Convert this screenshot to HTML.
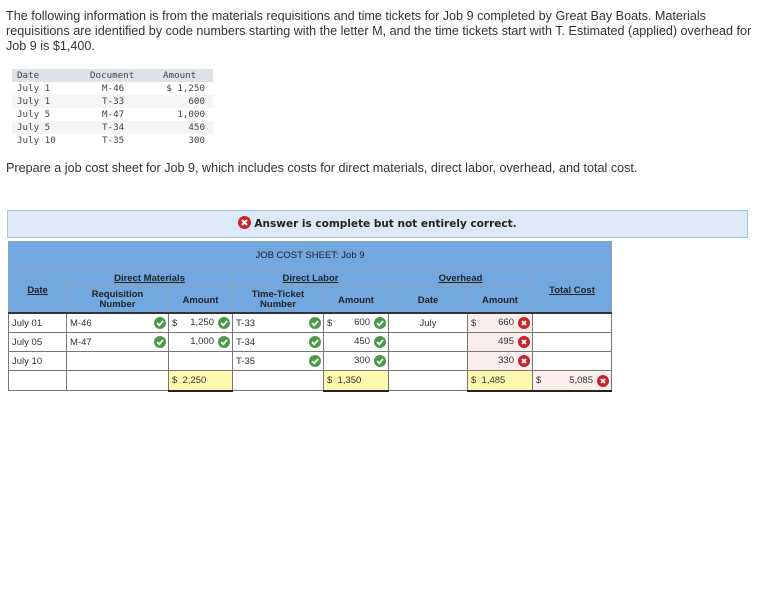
<!DOCTYPE html>
<html><head><meta charset="utf-8"><style>
body{margin:0;background:#fff;font-family:"Liberation Sans",sans-serif;color:#333;width:772px;height:614px;position:relative;overflow:hidden}
.p{position:absolute;left:6px;font-size:12.6px;line-height:15px;color:#333;white-space:nowrap}
.mono{position:absolute;left:12px;top:69px;font-family:"DejaVu Sans Mono","Liberation Mono",monospace;font-size:9.2px;color:#444}
.mono div{height:13px;line-height:13px;position:relative;width:201px}
.mono span{position:absolute}
.banner{position:absolute;left:7px;top:210px;width:741px;height:28px;background:#dde9f6;border:1px solid #a9c3df;box-sizing:border-box;text-align:center;font-family:"DejaVu Sans",sans-serif;font-weight:bold;font-size:10.5px;line-height:27px;color:#222}
table{position:absolute;left:8px;top:241px;border-collapse:collapse;font-size:9.5px;table-layout:fixed}
td{border:1px solid #777;padding:0 3px;height:18px;color:#333;position:relative}
.h{background:#72a7e0;font-weight:bold;color:#222;text-align:center;border-color:#8a9fb8}
.u{text-decoration:underline}
.y{background:#fff9b0}
.pk{background:#fdeeee}
.i{display:inline-block;width:12px;height:12px;border-radius:50%;position:absolute;top:3px;right:2px}
.g{background:#4a9a4a}
.x{background:#c4252c}
.i svg{position:absolute;left:0;top:0}
.bb{border-bottom:2px solid #222}
</style></head><body>
<div class="p" style="top:9px">The following information is from the materials requisitions and time tickets for Job 9 completed by Great Bay Boats. Materials</div>
<div class="p" style="top:24px">requisitions are identified by code numbers starting with the letter M, and the time tickets start with T. Estimated (applied) overhead for</div>
<div class="p" style="top:39px">Job 9 is $1,400.</div>
<div class="mono">
<div style="background:#dde1e8"><span style="left:5px">Date</span><span style="left:78px">Document</span><span style="left:151px">Amount</span></div>
<div><span style="left:5px">July 1</span><span style="left:90px">M-46</span><span style="right:8px">$ 1,250</span></div>
<div style="background:#f5f5f5"><span style="left:5px">July 1</span><span style="left:90px">T-33</span><span style="right:8px">600</span></div>
<div><span style="left:5px">July 5</span><span style="left:90px">M-47</span><span style="right:8px">1,000</span></div>
<div style="background:#f5f5f5"><span style="left:5px">July 5</span><span style="left:90px">T-34</span><span style="right:8px">450</span></div>
<div><span style="left:5px">July 10</span><span style="left:90px">T-35</span><span style="right:8px">300</span></div>
</div>
<div class="p" style="top:161px">Prepare a job cost sheet for Job 9, which includes costs for direct materials, direct labor, overhead, and total cost.</div>
<div class="banner"><svg width="13" height="13" style="vertical-align:-2px;margin-right:3px"><circle cx="6.5" cy="6.5" r="6.5" fill="#c4252c"/><path d="M4 4L9 9M9 4L4 9" stroke="#fff" stroke-width="2"/></svg>Answer is complete but not entirely correct.</div>
<table>
<colgroup><col style="width:58px"><col style="width:102px"><col style="width:64px"><col style="width:91px"><col style="width:65px"><col style="width:79px"><col style="width:65px"><col style="width:79px"></colgroup>
<tr><td class="h" colspan="8" style="height:26px;font-weight:normal">JOB COST SHEET: Job 9</td></tr>
<tr><td class="h u" rowspan="2">Date</td><td class="h u" colspan="2">Direct Materials</td><td class="h u" colspan="2">Direct Labor</td><td class="h u" colspan="2">Overhead</td><td class="h u" rowspan="2">Total Cost</td></tr>
<tr><td class="h" style="height:24px;line-height:10px">Requisition<br>Number</td><td class="h">Amount</td><td class="h" style="line-height:10px">Time-Ticket<br>Number</td><td class="h">Amount</td><td class="h">Date</td><td class="h">Amount</td></tr>
<tr style="border-top:2px solid #333"><td>July 01</td><td>M-46<span class="i g"><svg width="12" height="12"><path d="M3 6L5.3 8.3L9 4" stroke="#fff" stroke-width="1.8" fill="none"/></svg></span></td><td>$<span style="position:absolute;right:18px;top:3px">1,250</span><span class="i g"><svg width="12" height="12"><path d="M3 6L5.3 8.3L9 4" stroke="#fff" stroke-width="1.8" fill="none"/></svg></span></td><td>T-33<span class="i g"><svg width="12" height="12"><path d="M3 6L5.3 8.3L9 4" stroke="#fff" stroke-width="1.8" fill="none"/></svg></span></td><td>$<span style="position:absolute;right:18px;top:3px">600</span><span class="i g"><svg width="12" height="12"><path d="M3 6L5.3 8.3L9 4" stroke="#fff" stroke-width="1.8" fill="none"/></svg></span></td><td style="text-align:center">July</td><td class="pk">$<span style="position:absolute;right:18px;top:3px">660</span><span class="i x"><svg width="12" height="12"><path d="M4 4L8 8M8 4L4 8" stroke="#fff" stroke-width="1.8"/></svg></span></td><td></td></tr>
<tr><td>July 05</td><td>M-47<span class="i g"><svg width="12" height="12"><path d="M3 6L5.3 8.3L9 4" stroke="#fff" stroke-width="1.8" fill="none"/></svg></span></td><td><span style="position:absolute;right:18px;top:3px">1,000</span><span class="i g"><svg width="12" height="12"><path d="M3 6L5.3 8.3L9 4" stroke="#fff" stroke-width="1.8" fill="none"/></svg></span></td><td>T-34<span class="i g"><svg width="12" height="12"><path d="M3 6L5.3 8.3L9 4" stroke="#fff" stroke-width="1.8" fill="none"/></svg></span></td><td><span style="position:absolute;right:18px;top:3px">450</span><span class="i g"><svg width="12" height="12"><path d="M3 6L5.3 8.3L9 4" stroke="#fff" stroke-width="1.8" fill="none"/></svg></span></td><td></td><td class="pk"><span style="position:absolute;right:18px;top:3px">495</span><span class="i x"><svg width="12" height="12"><path d="M4 4L8 8M8 4L4 8" stroke="#fff" stroke-width="1.8"/></svg></span></td><td></td></tr>
<tr><td>July 10</td><td></td><td></td><td>T-35<span class="i g"><svg width="12" height="12"><path d="M3 6L5.3 8.3L9 4" stroke="#fff" stroke-width="1.8" fill="none"/></svg></span></td><td><span style="position:absolute;right:18px;top:3px">300</span><span class="i g"><svg width="12" height="12"><path d="M3 6L5.3 8.3L9 4" stroke="#fff" stroke-width="1.8" fill="none"/></svg></span></td><td></td><td class="pk"><span style="position:absolute;right:18px;top:3px">330</span><span class="i x"><svg width="12" height="12"><path d="M4 4L8 8M8 4L4 8" stroke="#fff" stroke-width="1.8"/></svg></span></td><td></td></tr>
<tr style="height:20px"><td></td><td></td><td class="y bb">$&nbsp;&nbsp;2,250</td><td></td><td class="y bb">$&nbsp;&nbsp;1,350</td><td></td><td class="y bb">$&nbsp;&nbsp;1,485</td><td class="pk bb">$<span style="position:absolute;right:18px;top:4px">5,085</span><span class="i x" style="top:4px"><svg width="12" height="12"><path d="M4 4L8 8M8 4L4 8" stroke="#fff" stroke-width="1.8"/></svg></span></td></tr>
</table>
</body></html>
